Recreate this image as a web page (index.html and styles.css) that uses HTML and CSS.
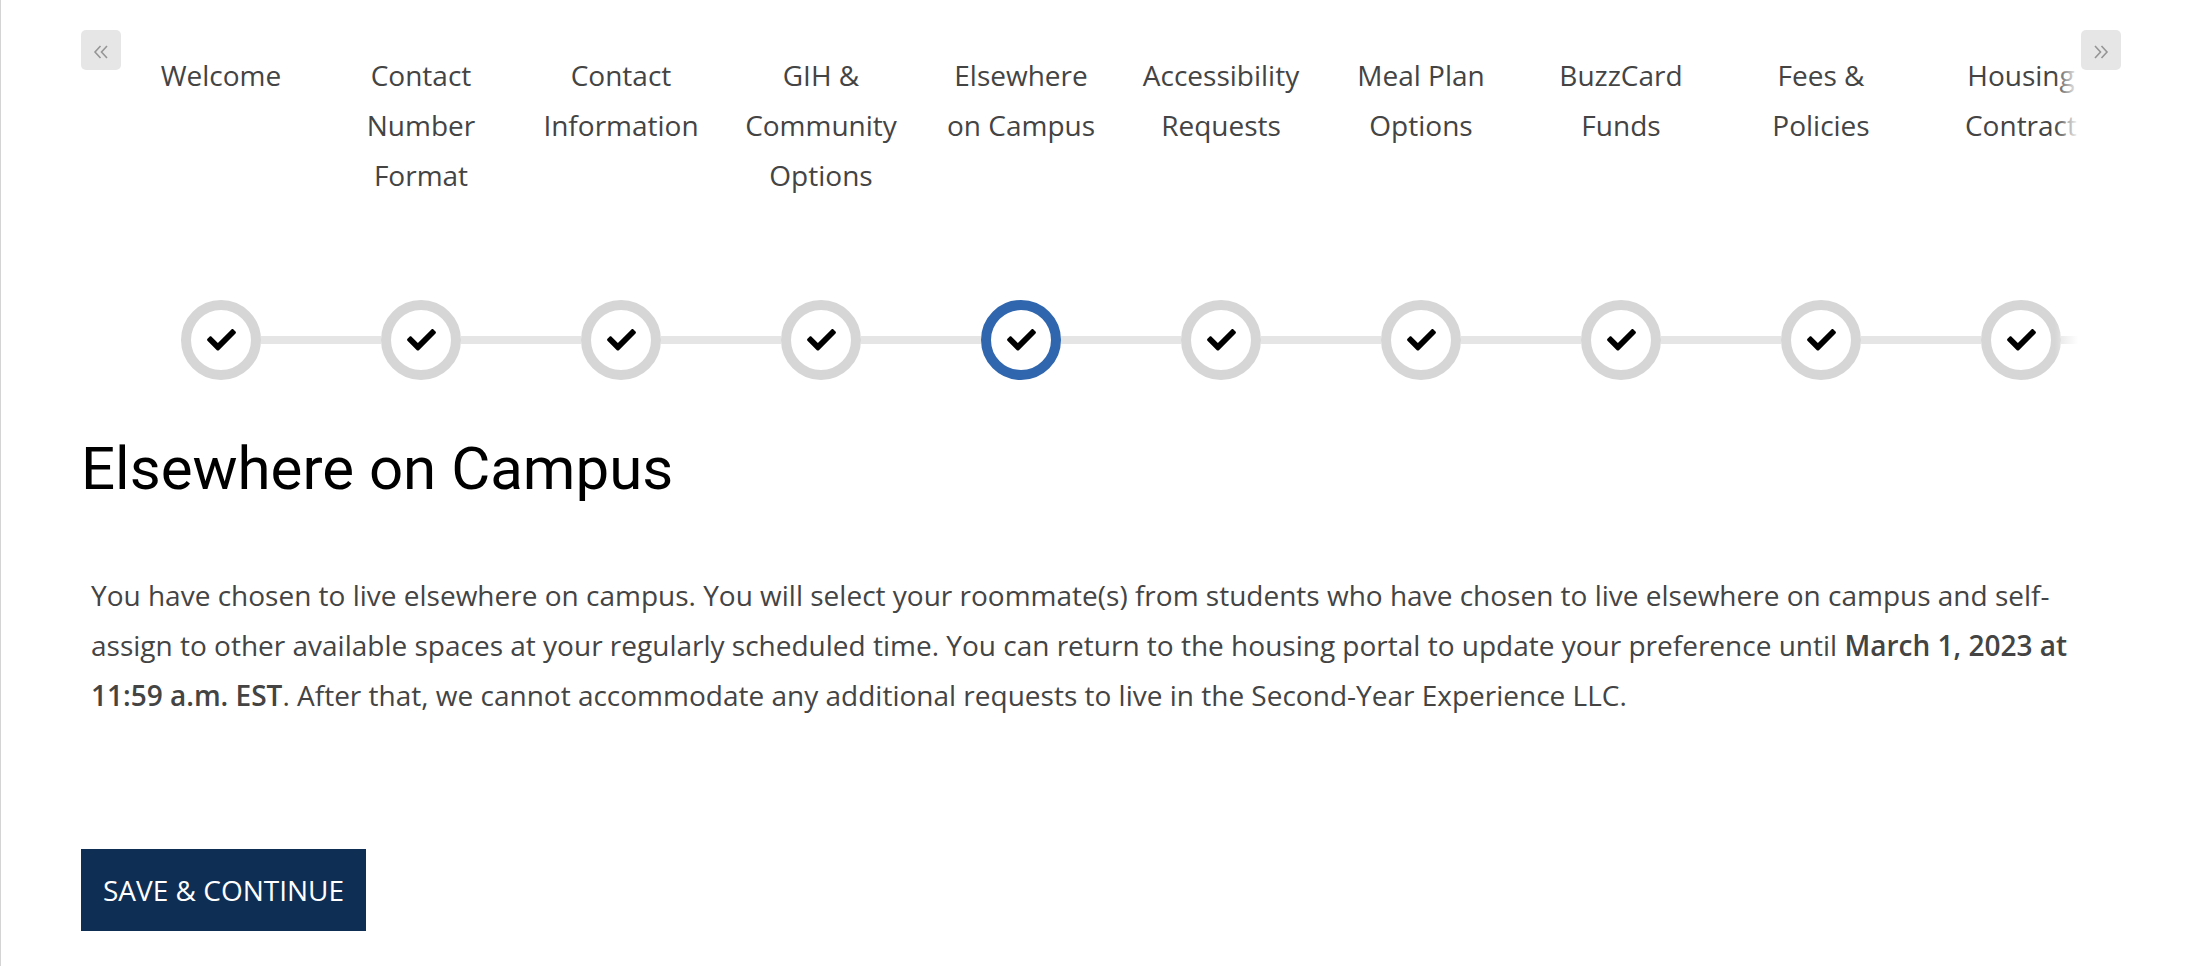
FILE: index.html
```html
<!DOCTYPE html>
<html lang="en">
<head>
<meta charset="utf-8">
<title>Elsewhere on Campus</title>
<link rel="stylesheet" href="styles.css">
</head>
<body>
<div class="page">
  <div class="stepper">
    <button class="nav-btn" type="button" aria-label="Previous">
      <svg width="16" height="14" viewBox="0 0 16 14"><polyline points="7.5,1 2,7 7.5,13" /><polyline points="14,1 8.5,7 14,13" /></svg>
    </button>
    <div class="viewport">
      <div class="steps">
        <div class="step">
          <div class="label">Welcome</div>
          <div class="track"><span class="seg seg-none"></span><span class="dot"><svg class="check" viewBox="0 64 512 390"><path d="M173.898 439.404l-166.4-166.4c-9.997-9.997-9.997-26.206 0-36.204l36.203-36.204c9.997-9.998 26.207-9.998 36.204 0L192 312.69 432.095 72.596c9.997-9.997 26.207-9.997 36.204 0l36.203 36.204c9.997 9.997 9.997 26.206 0 36.204l-294.4 294.401c-9.998 9.997-26.207 9.997-36.204-.001z"/></svg></span><span class="seg"></span></div>
        </div>
        <div class="step">
          <div class="label">Contact Number Format</div>
          <div class="track"><span class="seg"></span><span class="dot"><svg class="check" viewBox="0 64 512 390"><path d="M173.898 439.404l-166.4-166.4c-9.997-9.997-9.997-26.206 0-36.204l36.203-36.204c9.997-9.998 26.207-9.998 36.204 0L192 312.69 432.095 72.596c9.997-9.997 26.207-9.997 36.204 0l36.203 36.204c9.997 9.997 9.997 26.206 0 36.204l-294.4 294.401c-9.998 9.997-26.207 9.997-36.204-.001z"/></svg></span><span class="seg"></span></div>
        </div>
        <div class="step">
          <div class="label">Contact Information</div>
          <div class="track"><span class="seg"></span><span class="dot"><svg class="check" viewBox="0 64 512 390"><path d="M173.898 439.404l-166.4-166.4c-9.997-9.997-9.997-26.206 0-36.204l36.203-36.204c9.997-9.998 26.207-9.998 36.204 0L192 312.69 432.095 72.596c9.997-9.997 26.207-9.997 36.204 0l36.203 36.204c9.997 9.997 9.997 26.206 0 36.204l-294.4 294.401c-9.998 9.997-26.207 9.997-36.204-.001z"/></svg></span><span class="seg"></span></div>
        </div>
        <div class="step">
          <div class="label">GIH &amp; Community Options</div>
          <div class="track"><span class="seg"></span><span class="dot"><svg class="check" viewBox="0 64 512 390"><path d="M173.898 439.404l-166.4-166.4c-9.997-9.997-9.997-26.206 0-36.204l36.203-36.204c9.997-9.998 26.207-9.998 36.204 0L192 312.69 432.095 72.596c9.997-9.997 26.207-9.997 36.204 0l36.203 36.204c9.997 9.997 9.997 26.206 0 36.204l-294.4 294.401c-9.998 9.997-26.207 9.997-36.204-.001z"/></svg></span><span class="seg"></span></div>
        </div>
        <div class="step">
          <div class="label">Elsewhere on Campus</div>
          <div class="track"><span class="seg"></span><span class="dot dot-active"><svg class="check" viewBox="0 64 512 390"><path d="M173.898 439.404l-166.4-166.4c-9.997-9.997-9.997-26.206 0-36.204l36.203-36.204c9.997-9.998 26.207-9.998 36.204 0L192 312.69 432.095 72.596c9.997-9.997 26.207-9.997 36.204 0l36.203 36.204c9.997 9.997 9.997 26.206 0 36.204l-294.4 294.401c-9.998 9.997-26.207 9.997-36.204-.001z"/></svg></span><span class="seg"></span></div>
        </div>
        <div class="step">
          <div class="label">Accessibility Requests</div>
          <div class="track"><span class="seg"></span><span class="dot"><svg class="check" viewBox="0 64 512 390"><path d="M173.898 439.404l-166.4-166.4c-9.997-9.997-9.997-26.206 0-36.204l36.203-36.204c9.997-9.998 26.207-9.998 36.204 0L192 312.69 432.095 72.596c9.997-9.997 26.207-9.997 36.204 0l36.203 36.204c9.997 9.997 9.997 26.206 0 36.204l-294.4 294.401c-9.998 9.997-26.207 9.997-36.204-.001z"/></svg></span><span class="seg"></span></div>
        </div>
        <div class="step">
          <div class="label">Meal Plan Options</div>
          <div class="track"><span class="seg"></span><span class="dot"><svg class="check" viewBox="0 64 512 390"><path d="M173.898 439.404l-166.4-166.4c-9.997-9.997-9.997-26.206 0-36.204l36.203-36.204c9.997-9.998 26.207-9.998 36.204 0L192 312.69 432.095 72.596c9.997-9.997 26.207-9.997 36.204 0l36.203 36.204c9.997 9.997 9.997 26.206 0 36.204l-294.4 294.401c-9.998 9.997-26.207 9.997-36.204-.001z"/></svg></span><span class="seg"></span></div>
        </div>
        <div class="step">
          <div class="label">BuzzCard Funds</div>
          <div class="track"><span class="seg"></span><span class="dot"><svg class="check" viewBox="0 64 512 390"><path d="M173.898 439.404l-166.4-166.4c-9.997-9.997-9.997-26.206 0-36.204l36.203-36.204c9.997-9.998 26.207-9.998 36.204 0L192 312.69 432.095 72.596c9.997-9.997 26.207-9.997 36.204 0l36.203 36.204c9.997 9.997 9.997 26.206 0 36.204l-294.4 294.401c-9.998 9.997-26.207 9.997-36.204-.001z"/></svg></span><span class="seg"></span></div>
        </div>
        <div class="step">
          <div class="label">Fees &amp; Policies</div>
          <div class="track"><span class="seg"></span><span class="dot"><svg class="check" viewBox="0 64 512 390"><path d="M173.898 439.404l-166.4-166.4c-9.997-9.997-9.997-26.206 0-36.204l36.203-36.204c9.997-9.998 26.207-9.998 36.204 0L192 312.69 432.095 72.596c9.997-9.997 26.207-9.997 36.204 0l36.203 36.204c9.997 9.997 9.997 26.206 0 36.204l-294.4 294.401c-9.998 9.997-26.207 9.997-36.204-.001z"/></svg></span><span class="seg"></span></div>
        </div>
        <div class="step">
          <div class="label">Housing Contract</div>
          <div class="track"><span class="seg"></span><span class="dot"><svg class="check" viewBox="0 64 512 390"><path d="M173.898 439.404l-166.4-166.4c-9.997-9.997-9.997-26.206 0-36.204l36.203-36.204c9.997-9.998 26.207-9.998 36.204 0L192 312.69 432.095 72.596c9.997-9.997 26.207-9.997 36.204 0l36.203 36.204c9.997 9.997 9.997 26.206 0 36.204l-294.4 294.401c-9.998 9.997-26.207 9.997-36.204-.001z"/></svg></span><span class="seg"></span></div>
        </div>
      </div>
      <div class="fade"></div>
    </div>
    <button class="nav-btn" type="button" aria-label="Next">
      <svg width="16" height="14" viewBox="0 0 16 14"><polyline points="2,1 7.5,7 2,13" /><polyline points="8.5,1 14,7 8.5,13" /></svg>
    </button>
  </div>

  <h1 class="title">Elsewhere on Campus</h1>

  <p class="intro">You have chosen to live elsewhere on campus. You will select your roommate(s) from students who have chosen to live elsewhere on campus and self-assign to other available spaces at your regularly scheduled time. You can return to the housing portal to update your preference until <strong>March 1, 2023 at</strong> <strong>11:59 a.m. EST</strong>. After that, we cannot accommodate any additional requests to live in the Second-Year Experience LLC.</p>

  <button class="save-btn" type="button">Save &amp; Continue</button>
</div>
</body>
</html>
```

FILE: styles.css
```css
html, body {
  margin: 0;
  padding: 0;
  background: #ffffff;
}

body {
  font-family: "Open Sans", "Liberation Sans", sans-serif;
  color: #444444;
}

.page {
  min-height: 966px;
  box-sizing: border-box;
  border-left: 1px solid #d4d4d4;
  padding: 30px 0 0 80px;
  width: 2121px;
}

.stepper {
  display: flex;
  align-items: flex-start;
}

.nav-btn {
  flex: 0 0 40px;
  width: 40px;
  height: 40px;
  padding: 0;
  margin: 0;
  border: none;
  border-radius: 5px;
  background: #e6e6e6;
  display: flex;
  align-items: center;
  justify-content: center;
  cursor: pointer;
}

.nav-btn svg {
  margin-top: 3px;
}

.nav-btn polyline {
  fill: none;
  stroke: #959595;
  stroke-width: 1.6;
}

.viewport {
  flex: 0 0 1960px;
  width: 1960px;
  overflow: hidden;
  position: relative;
  padding-top: 20px;
}

.steps {
  display: flex;
  width: max-content;
}

.step {
  flex: 0 0 200px;
  width: 200px;
  display: flex;
  flex-direction: column;
  align-items: center;
}

.label {
  width: 166px;
  height: 250px;
  text-align: center;
  font-size: 28px;
  line-height: 50px;
  color: #444444;
}

.track {
  width: 200px;
  height: 80px;
  display: flex;
  align-items: center;
}

.seg {
  flex: 1 1 auto;
  height: 8px;
  background: #e5e5e5;
}

.seg-none {
  background: transparent;
}

.dot {
  flex: 0 0 80px;
  width: 80px;
  height: 80px;
  box-sizing: border-box;
  border: 10px solid #d6d6d6;
  border-radius: 50%;
  background: #ffffff;
  display: flex;
  align-items: center;
  justify-content: center;
}

.dot-active {
  border-color: #3066ae;
}

.check {
  width: 29px;
  height: 22px;
  fill: #000000;
}

.fade {
  position: absolute;
  top: 0;
  right: 0;
  bottom: 0;
  width: 26px;
  background: linear-gradient(to right, rgba(255, 255, 255, 0), #ffffff 90%);
}

.title {
  margin: 54px 0 0;
  font-family: Roboto, "Liberation Sans", sans-serif;
  font-weight: 400;
  font-size: 60px;
  line-height: 70px;
  color: #000000;
}

.intro {
  margin: 66px 0 0;
  padding: 0 10px;
  width: 2020px;
  box-sizing: border-box;
  font-size: 28px;
  line-height: 50px;
  color: #444444;
}

.intro strong {
  font-weight: 600;
}

.save-btn {
  margin-top: 129px;
  height: 82px;
  padding: 0 22px;
  border: none;
  border-radius: 0;
  background: #0f2e54;
  color: #ffffff;
  font-family: "Open Sans", "Liberation Sans", sans-serif;
  font-size: 28px;
  text-transform: uppercase;
  cursor: pointer;
}
```
